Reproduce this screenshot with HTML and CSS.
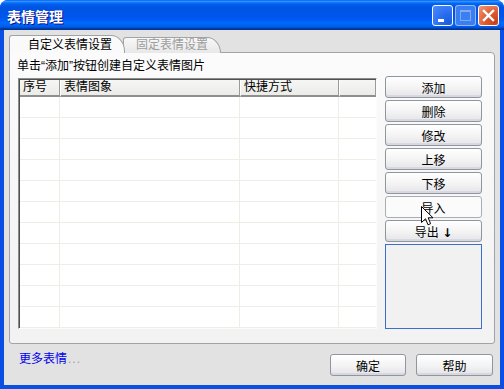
FILE: index.html
```html
<!DOCTYPE html>
<html lang="zh-CN">

<head>
    <meta charset="UTF-8">
    <title>表情管理</title>
    <link rel="stylesheet" href="styles.css">
</head>

<body>
    <div class="window">
        <div class="titlebar">
            <span class="title">表情管理</span>
            <div class="controls">
                <span class="ctl min"></span>
                <span class="ctl max"></span>
                <span class="ctl close">
                    <svg width="19" height="19" viewBox="0 0 19 19">
                        <path d="M5 5 L14 14 M14 5 L5 14" stroke="#fff" stroke-width="2.4" stroke-linecap="square" />
                    </svg>
                </span>
            </div>
        </div>

        <div class="content">
            <div class="tabs">
                <div class="tab active">自定义表情设置</div>
                <div class="tab">固定表情设置</div>
            </div>

            <div class="panel">
                <p class="hint">单击“添加”按钮创建自定义表情图片</p>
                <div class="main">
                    <div class="list">
                        <table class="grid">
                            <colgroup>
                                <col style="width:40px">
                                <col style="width:180px">
                                <col style="width:99px">
                                <col>
                            </colgroup>
                            <thead>
                                <tr>
                                    <th>序号</th>
                                    <th>表情图象</th>
                                    <th>快捷方式</th>
                                    <th></th>
                                </tr>
                            </thead>
                            <tbody>
                                <tr><td></td><td></td><td></td><td></td></tr>
                                <tr><td></td><td></td><td></td><td></td></tr>
                                <tr><td></td><td></td><td></td><td></td></tr>
                                <tr><td></td><td></td><td></td><td></td></tr>
                                <tr><td></td><td></td><td></td><td></td></tr>
                                <tr><td></td><td></td><td></td><td></td></tr>
                                <tr><td></td><td></td><td></td><td></td></tr>
                                <tr><td></td><td></td><td></td><td></td></tr>
                                <tr><td></td><td></td><td></td><td></td></tr>
                                <tr><td></td><td></td><td></td><td></td></tr>
                                <tr><td></td><td></td><td></td><td></td></tr>
                            </tbody>
                        </table>
                    </div>

                    <div class="side">
                        <button class="btn">添加</button>
                        <button class="btn">删除</button>
                        <button class="btn">修改</button>
                        <button class="btn">上移</button>
                        <button class="btn">下移</button>
                        <button class="btn hot">导入</button>
                        <button class="btn">导出 <b class="arrow">↓</b></button>
                        <div class="preview"></div>
                    </div>
                </div>
            </div>

            <div class="footer">
                <a class="more">更多表情<span class="dots">...</span></a>
                <div class="actions">
                    <button class="btn ok">确定</button>
                    <button class="btn help">帮助</button>
                </div>
            </div>
        </div>

        <!-- mouse pointer over the import button -->
        <svg class="cursor" width="13" height="21" viewBox="0 0 13 21">
            <path d="M0.5 0.5 L0.5 16.5 L4.5 12.8 L7 18.8 L9.6 17.7 L7.2 11.8 L12 11.8 Z" fill="#fff" stroke="#000" stroke-width="1" />
        </svg>
    </div>
</body>

</html>
```

FILE: styles.css
```css
html,
body {
    margin: 0;
    padding: 0;
    background: #ffffff;
}

.window {
    position: relative;
    width: 504px;
    height: 389px;
    box-sizing: border-box;
    display: flex;
    flex-direction: column;
    background: #0a4fe4;
    border-radius: 8px 8px 0 0;
    font-family: "Liberation Sans", "Noto Sans CJK SC", sans-serif;
    font-size: 12px;
    color: #000;
}

.titlebar {
    height: 30px;
    flex: none;
    display: flex;
    align-items: center;
    padding: 0 5px 0 7px;
    border-radius: 8px 8px 0 0;
    background: linear-gradient(#0058ee 0%, #3593ff 4%, #288eff 6%, #127dff 8%, #036ffc 10%, #0262ee 14%, #0057e5 20%, #0054e3 24%, #0055eb 56%, #005bf5 66%, #026afe 76%, #0062ef 86%, #0052d6 92%, #0040ab 94%, #003092 100%);
}

.title {
    flex: 1;
    color: #fff;
    font-weight: bold;
    font-size: 14px;
    text-shadow: 1px 1px #0f1089;
    margin-top: 1px;
}

.controls {
    display: flex;
    gap: 2px;
    margin-top: 1px;
}

.ctl {
    position: relative;
    width: 21px;
    height: 21px;
    box-sizing: border-box;
    border: 1px solid #fff;
    border-radius: 3px;
    display: flex;
    align-items: center;
    justify-content: center;
}

.min {
    background: radial-gradient(circle at 85% 85%, #1a5ee0 0%, #2a6cf0 40%, #4a8cff 100%);
}

.min::after {
    content: "";
    position: absolute;
    left: 5px;
    top: 13px;
    width: 6px;
    height: 3px;
    background: #fff;
}

.max {
    border-color: rgba(255, 255, 255, 0.45);
    background: #3a7ef2;
}

.max::after {
    content: "";
    width: 9px;
    height: 8px;
    border: 1px solid rgba(255, 255, 255, 0.35);
    border-top-width: 2px;
}

.close {
    background: radial-gradient(circle at 85% 85%, #c8401c 0%, #e05a30 45%, #f0997c 100%);
}

.content {
    flex: 1;
    display: flex;
    flex-direction: column;
    margin: 0 4px 4px;
    padding: 6px 5px 0;
    background: #e2e2e2;
}

/* tabs */
.tabs {
    display: flex;
    align-items: flex-end;
    height: 17px;
    margin-bottom: -1px;
    position: relative;
    z-index: 1;
}

.tab {
    height: 15px;
    line-height: 15px;
    padding: 0 12px;
    border: 1px solid #a0a4a8;
    border-bottom: none;
    border-radius: 3px 14px 0 0 / 3px 16px 0 0;
    background: linear-gradient(#f8f8f8, #e8e8e8);
    color: #9d9d9d;
    margin-left: -2px;
}

.tab.active {
    position: relative;
    z-index: 2;
    height: 17px;
    line-height: 18px;
    margin-left: 0;
    padding: 0 12px 0 18px;
    background: #fafafa;
    color: #000;
}

.panel {
    border: 1px solid #a0a4a8;
    border-radius: 0 4px 3px 3px;
    background: linear-gradient(#fbfbfb, #f2f2f2);
    padding: 6px 11px 14px 8px;
}

.hint {
    margin: 0 0 0 -1px;
    line-height: 14px;
    height: 14px;
}

.main {
    display: flex;
    gap: 8px;
    margin-top: 3px;
}

/* list view */
.list {
    width: 359px;
    height: 251px;
    margin-top: 2px;
    box-sizing: border-box;
    border: 1px solid;
    border-color: #8c8c8c #fcfcfc #fcfcfc #8c8c8c;
    background: #fff;
    overflow: hidden;
}

.grid {
    width: 100%;
    table-layout: fixed;
    border-collapse: separate;
    border-spacing: 0;
    border-left: 1px solid #505050;
    border-top: 1px solid #505050;
}

.grid th {
    height: 15px;
    padding: 0 0 0 3px;
    font-weight: normal;
    text-align: left;
    line-height: 15px;
    background: linear-gradient(#f6f6f4, #ebebe8);
    border-right: 1px solid #9a9a9a;
    border-left: 1px solid #ffffff;
    border-bottom: 2px solid #8e8e8e;
    white-space: nowrap;
    overflow: hidden;
}

.grid th:first-child {
    border-left: none;
}

.grid td {
    height: 20px;
    padding: 0;
    border-right: 1px solid #efeee6;
    border-bottom: 1px solid #efeee6;
}

.grid td:last-child {
    border-right: none;
}

/* buttons */
.btn {
    height: 22px;
    padding: 0;
    box-sizing: border-box;
    font-family: "Liberation Sans", "Noto Sans CJK SC", sans-serif;
    font-size: 12px;
    color: #000;
    border: 1px solid #8f969e;
    border-radius: 3px;
    background: linear-gradient(#ffffff, #f3f3f3 55%, #e4e4ea);
    box-shadow: inset 0 -2px 0 #d8d8e0;
}

.btn.hot {
    background: #fbfbfb;
    border-color: #a8aeb4;
    box-shadow: none;
}

.arrow {
    font-family: "DejaVu Sans", sans-serif;
    font-weight: bold;
    font-size: 12px;
}

.side {
    width: 97px;
    display: flex;
    flex-direction: column;
    gap: 2px;
}

.preview {
    height: 85px;
    box-sizing: border-box;
    border: 1px solid #3a6fd0;
    background: #f1f1f1;
}

/* bottom row */
.footer {
    display: flex;
    justify-content: space-between;
    align-items: flex-start;
    padding: 8px 2px 0 10px;
}

.more {
    color: #0000ee;
    line-height: 14px;
    cursor: pointer;
}

.dots {
    color: #9a9ab0;
    letter-spacing: 1px;
    margin-left: 1px;
}

.actions {
    display: flex;
    gap: 10px;
    margin-top: 2px;
}

.ok {
    width: 76px;
}

.help {
    width: 77px;
}

.cursor {
    position: absolute;
    left: 421px;
    top: 206px;
}
```
